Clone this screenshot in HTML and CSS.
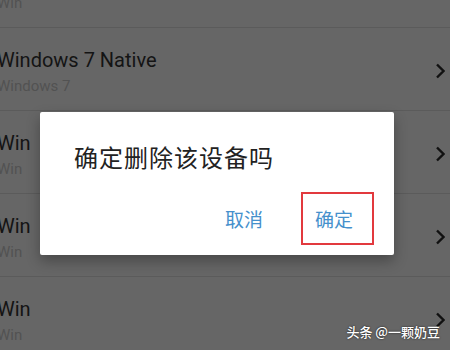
FILE: index.html
```html
<!DOCTYPE html>
<html lang="zh-CN">
<head>
    <meta charset="UTF-8">
    <meta name="viewport" content="width=device-width, initial-scale=1.0">
    <title>设备列表</title>
    <link rel="stylesheet" href="styles.css">
</head>
<body>
    <div class="device-list">
        <div class="device-row">
            <div class="device-text">
                <div class="device-name">Win</div>
                <div class="device-sub">Win</div>
            </div>
        </div>
        <div class="device-row">
            <div class="device-text">
                <div class="device-name">Windows 7 Native</div>
                <div class="device-sub">Windows 7</div>
            </div>
            <svg class="chevron" viewBox="0 0 10 16"><polyline points="2,1.5 8.5,8 2,14.5"/></svg>
        </div>
        <div class="device-row">
            <div class="device-text">
                <div class="device-name">Win</div>
                <div class="device-sub">Win</div>
            </div>
            <svg class="chevron" viewBox="0 0 10 16"><polyline points="2,1.5 8.5,8 2,14.5"/></svg>
        </div>
        <div class="device-row">
            <div class="device-text">
                <div class="device-name">Win</div>
                <div class="device-sub">Win</div>
            </div>
            <svg class="chevron" viewBox="0 0 10 16"><polyline points="2,1.5 8.5,8 2,14.5"/></svg>
        </div>
        <div class="device-row">
            <div class="device-text">
                <div class="device-name">Win</div>
                <div class="device-sub">Win</div>
            </div>
            <svg class="chevron" viewBox="0 0 10 16"><polyline points="2,1.5 8.5,8 2,14.5"/></svg>
        </div>
    </div>

    <!-- confirm dialog -->
    <div class="dialog">
        <div class="dialog-title">确定删除该设备吗</div>
        <div class="dialog-actions">
            <button class="dialog-btn">取消</button>
            <button class="dialog-btn confirm">确定</button>
        </div>
    </div>

    <div class="watermark">头条 @一颗奶豆</div>
</body>
</html>
```

FILE: styles.css
```css
* {
    margin: 0;
    padding: 0;
    box-sizing: border-box;
}

body {
    font-family: Roboto, "Noto Sans CJK SC", sans-serif;
    background-color: #666;
    width: 450px;
    height: 350px;
    overflow: hidden;
    position: relative;
}

.device-list {
    margin-top: -55px;
}

.device-row {
    height: 83px;
    border-bottom: 1px solid #5b5b5b;
    display: flex;
    align-items: center;
    justify-content: space-between;
    padding-right: 5px;
}

.device-text {
    margin-left: -3px;
    padding-top: 5px;
}

.device-name {
    font-size: 20px;
    line-height: 24px;
    color: #141414;
}

.device-sub {
    font-size: 15px;
    line-height: 20px;
    margin-top: 4px;
    color: #525252;
}

.chevron {
    width: 10px;
    height: 16px;
    margin-top: 4px;
    fill: none;
    stroke: #111;
    stroke-width: 2.4;
}

.dialog {
    position: absolute;
    left: 40px;
    top: 112px;
    width: 354px;
    height: 143px;
    background: white;
    border-radius: 2px;
    box-shadow: 0 6px 14px rgba(0,0,0,0.3);
    font-family: "Noto Sans CJK SC", sans-serif;
}

.dialog-title {
    padding: 29px 0 0 34px;
    font-size: 24px;
    line-height: 32px;
    letter-spacing: 1px;
    color: #222;
}

.dialog-actions {
    display: flex;
    justify-content: flex-end;
    align-items: center;
    gap: 38px;
    margin-top: 19px;
    padding-right: 20px;
}

.dialog-btn {
    background: none;
    border: none;
    font-family: inherit;
    font-size: 19px;
    color: #4590cc;
    cursor: pointer;
}

.dialog-btn.confirm {
    width: 73px;
    height: 53px;
    border: 2px solid #e2393e;
    text-align: left;
    padding-left: 12px;
}

.watermark {
    position: absolute;
    right: 10px;
    bottom: 9px;
    font-family: "Noto Sans CJK SC", sans-serif;
    font-size: 13px;
    font-weight: 500;
    color: white;
    text-shadow: 0 0 2px rgba(0,0,0,0.8);
}
```
